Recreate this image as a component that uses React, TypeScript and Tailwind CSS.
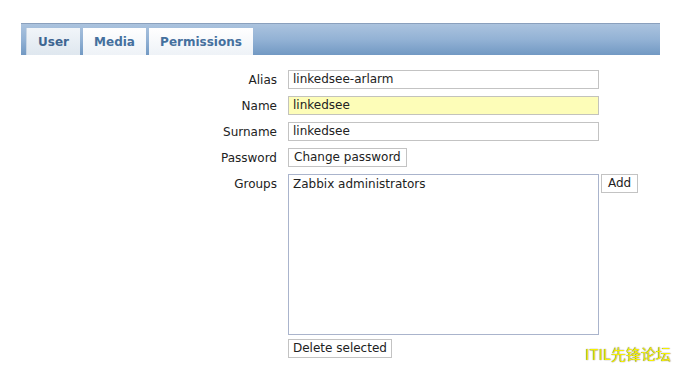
import React from "react";

const font = { fontFamily: '"DejaVu Sans", Verdana, sans-serif' };

function Row({ label, children }: { label: string; children: React.ReactNode }) {
  return (
    <div className="flex items-start">
      <div className="w-[278px] shrink-0 text-right pr-[1px] text-[12px] text-[#222] h-[19px] leading-[21px]">{label}</div>
      <div className="ml-[10px] flex items-start">{children}</div>
    </div>
  );
}

export default function App() {
  return (
    <div className="w-[673px] h-[367px] bg-white relative overflow-hidden" style={font}>
      <div className="pt-[23px] pl-[21px]">
        <div className="w-[639px] h-[32px] border-t border-[#8aa0bd] bg-gradient-to-b from-[#abc3de] via-[#93b2d5] to-[#7299c3] flex items-end pl-[5px] gap-[3px]">
          <div className="h-[27px] w-[54px] bg-gradient-to-b from-[#f1f5f9] to-[#dfe7ef] flex items-center justify-center text-[12px] font-bold text-[#3d6591] border-l border-[#c9d6e4]">User</div>
          <div className="h-[27px] w-[63px] bg-gradient-to-b from-[#ffffff] to-[#eef2f7] flex items-center justify-center text-[12px] font-bold text-[#45709e]">Media</div>
          <div className="h-[27px] w-[104px] bg-gradient-to-b from-[#ffffff] to-[#eef2f7] flex items-center justify-center text-[12px] font-bold text-[#45709e]">Permissions</div>
        </div>
      </div>
      <div className="mt-[15px] flex flex-col gap-[7px] text-[12px] text-[#222]">
        <Row label="Alias">
          <div className="w-[311px] h-[19px] border border-[#c3c3c3] bg-white px-[4px] leading-[17px]">linkedsee-arlarm</div>
        </Row>
        <Row label="Name">
          <div className="w-[311px] h-[19px] border border-[#c3c3bc] bg-[#fdfdb8] px-[4px] leading-[17px]">linkedsee</div>
        </Row>
        <Row label="Surname">
          <div className="w-[311px] h-[19px] border border-[#c3c3c3] bg-white px-[4px] leading-[17px]">linkedsee</div>
        </Row>
        <Row label="Password">
          <div className="h-[19px] border border-[#c3c3c3] bg-white px-[5px] leading-[17px]">Change password</div>
        </Row>
        <Row label="Groups">
          <div className="flex flex-col items-start gap-[4px]">
            <div className="w-[311px] h-[161px] border border-[#aab4cc] bg-white px-[4px] pt-[1px] leading-[17px]">Zabbix administrators</div>
            <div className="h-[19px] border border-[#c3c3c3] bg-white px-[4px] leading-[17px]">Delete selected</div>
          </div>
          <div className="ml-[2px] h-[19px] border border-[#c3c3c3] bg-white px-[6px] leading-[17px]">Add</div>
        </Row>
      </div>
      <div
        className="absolute left-[585px] top-[344px] text-[15px] leading-[20px] text-[#f5f000] whitespace-nowrap"
        style={{ fontFamily: '"Noto Sans CJK SC", sans-serif', textShadow: "0 0 1px #333" }}
      >
        ITIL先锋论坛
      </div>
    </div>
  );
}
